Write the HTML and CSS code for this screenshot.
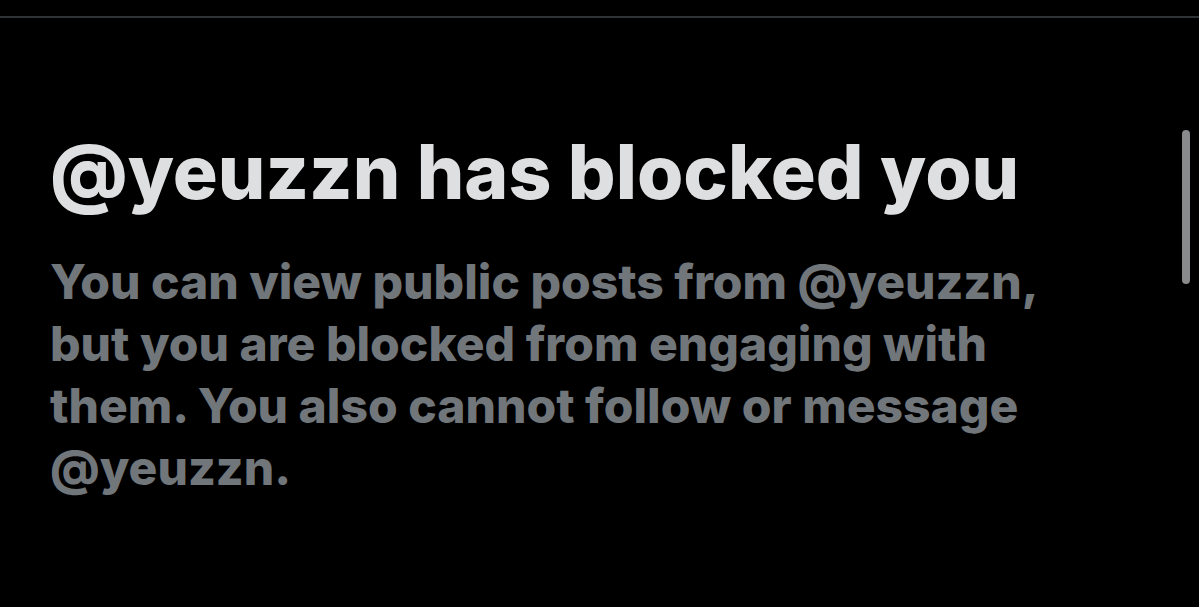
FILE: index.html
```html
<!DOCTYPE html>
<html lang="en">
<head>
    <meta charset="UTF-8">
    <meta name="viewport" content="width=device-width, initial-scale=1.0">
    <title>Blocked</title>
    <link rel="stylesheet" href="styles.css">
</head>
<body>
    <div class="topbar"></div>
    <div class="page">
        <div class="notice">
            <h1 class="notice-title">@yeuzzn has blocked you</h1>
            <p class="notice-text">You can view public posts from @yeuzzn, but you are blocked from engaging with them. You also cannot follow or message @yeuzzn.</p>
        </div>
        <div class="scrollbar"></div>
    </div>
</body>
</html>
```

FILE: styles.css
```css
body {
    font-family: Inter, "Noto Sans", sans-serif;
    background-color: #000;
    margin: 0;
    padding: 0;
    height: 607px;
    overflow: hidden;
}
.topbar {
    height: 16px;
    border-bottom: 2px solid #2f3336;
}
.page {
    display: flex;
    justify-content: space-between;
}
.notice {
    width: 1040px;
    padding: 109px 0 0 50px;
}
.notice-title {
    font-size: 75px;
    font-weight: 800;
    color: #dedfe0;
    margin: 0 0 34px;
    line-height: 90px;
    white-space: nowrap;
}
.notice-text {
    font-size: 48px;
    font-weight: 800;
    color: #71767b;
    margin: 0;
    line-height: 62px;
}
.scrollbar {
    width: 8px;
    height: 154px;
    margin: 112px 9px 0 0;
    background-color: #888a8c;
    border-radius: 4px;
}
```
